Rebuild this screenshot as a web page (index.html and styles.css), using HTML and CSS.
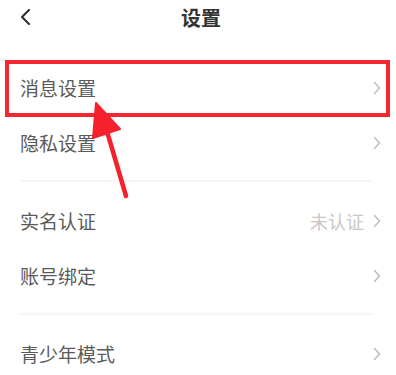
FILE: index.html
```html
<!DOCTYPE html>
<html lang="zh">
<head>
<meta charset="utf-8">
<link rel="stylesheet" href="styles.css">
</head>
<body>
<div class="page">
  <header class="topbar">
    <svg class="back" width="14" height="18" viewBox="0 0 14 18"><path d="M11 2 L4 9 L11 16" fill="none" stroke="#333" stroke-width="2.2" stroke-linecap="round" stroke-linejoin="round"/></svg>
    <div class="title">设置</div>
  </header>
  <main class="list">
    <div class="row"><span class="label">消息设置</span><span class="right"><svg class="chev" width="8" height="14" viewBox="0 0 8 14"><path d="M1.5 1.5 L6.5 7 L1.5 12.5" fill="none" stroke="#bdbdbd" stroke-width="1.5" stroke-linecap="round" stroke-linejoin="round"/></svg></span></div>
    <div class="row"><span class="label">隐私设置</span><span class="right"><svg class="chev" width="8" height="14" viewBox="0 0 8 14"><path d="M1.5 1.5 L6.5 7 L1.5 12.5" fill="none" stroke="#bdbdbd" stroke-width="1.5" stroke-linecap="round" stroke-linejoin="round"/></svg></span></div>
    <div class="divider"></div>
    <div class="row"><span class="label">实名认证</span><span class="right"><span class="value">未认证</span><svg class="chev" width="8" height="14" viewBox="0 0 8 14"><path d="M1.5 1.5 L6.5 7 L1.5 12.5" fill="none" stroke="#bdbdbd" stroke-width="1.5" stroke-linecap="round" stroke-linejoin="round"/></svg></span></div>
    <div class="row"><span class="label">账号绑定</span><span class="right"><svg class="chev" width="8" height="14" viewBox="0 0 8 14"><path d="M1.5 1.5 L6.5 7 L1.5 12.5" fill="none" stroke="#bdbdbd" stroke-width="1.5" stroke-linecap="round" stroke-linejoin="round"/></svg></span></div>
    <div class="divider"></div>
    <div class="row"><span class="label">青少年模式</span><span class="right"><svg class="chev" width="8" height="14" viewBox="0 0 8 14"><path d="M1.5 1.5 L6.5 7 L1.5 12.5" fill="none" stroke="#bdbdbd" stroke-width="1.5" stroke-linecap="round" stroke-linejoin="round"/></svg></span></div>
  </main>
  <div class="highlight"></div>
  <svg class="arrow" width="396" height="375" viewBox="0 0 396 375">
    <line x1="126" y1="196" x2="106" y2="128" stroke="#f5222d" stroke-width="4.5" stroke-linecap="round"/>
    <polygon points="96,103 93,138 120,129" fill="#f5222d" stroke="#f5222d" stroke-width="2" stroke-linejoin="round"/>
  </svg>
</div>
</body>
</html>
```

FILE: styles.css
```css
html, body {
  margin: 0;
  padding: 0;
  background: #ffffff;
}
.page {
  position: relative;
  width: 396px;
  height: 375px;
  overflow: hidden;
  font-family: "Noto Sans CJK SC", "Noto Sans", sans-serif;
}
.topbar {
  position: relative;
  height: 36px;
  display: flex;
  align-items: center;
  justify-content: center;
}
.back {
  position: absolute;
  left: 18px;
  top: 8px;
}
.title {
  font-size: 20px;
  font-weight: 700;
  color: #333333;
  line-height: 36px;
  margin-left: 6px;
}
.list {
  padding-top: 24px;
}
.row {
  height: 55px;
  display: flex;
  align-items: center;
  justify-content: space-between;
  padding: 0 15px 0 20px;
}
.label {
  font-size: 19px;
  color: #5a5a5a;
  line-height: 1;
}
.right {
  display: flex;
  align-items: center;
  gap: 9px;
}
.value {
  font-size: 18px;
  color: #c8c8c8;
  line-height: 1;
}
.chev {
  display: block;
}
.divider {
  height: 2px;
  background: #f6f6f6;
  margin: 10px 23px 11px 20px;
}
.highlight {
  position: absolute;
  left: 5px;
  top: 60px;
  width: 377px;
  height: 49px;
  border: 4px solid #f4262f;
}
.arrow {
  position: absolute;
  left: 0;
  top: 0;
}
```
